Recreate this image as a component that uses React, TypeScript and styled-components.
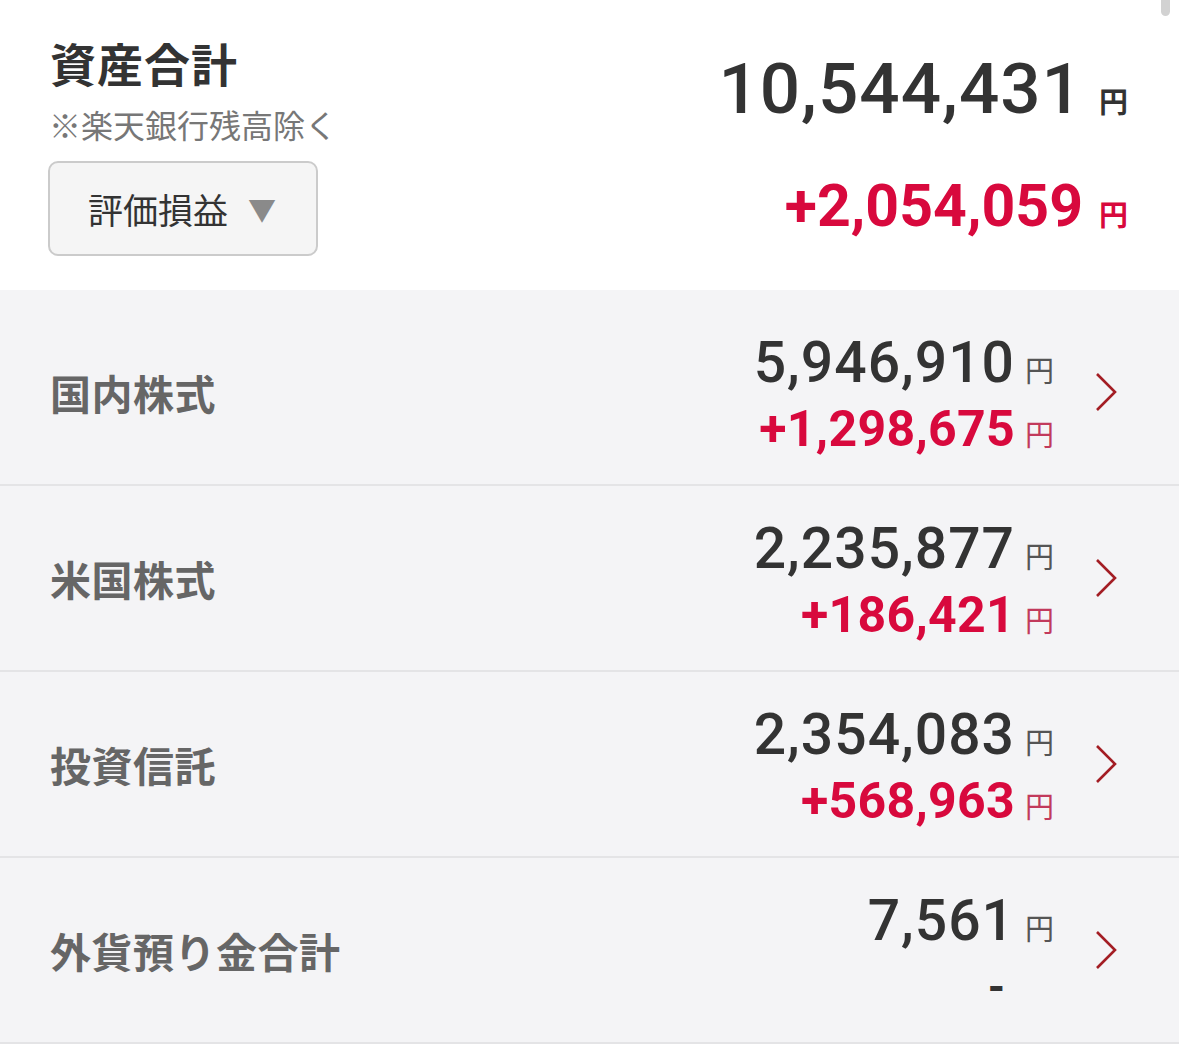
import React, { FC } from 'react';
import styled, { createGlobalStyle } from 'styled-components';

type Holding = {
  label: string;
  amount: string;
  profit?: string;
};

const holdings: Holding[] = [
  { label: '国内株式', amount: '5,946,910', profit: '+1,298,675' },
  { label: '米国株式', amount: '2,235,877', profit: '+186,421' },
  { label: '投資信託', amount: '2,354,083', profit: '+568,963' },
  { label: '外貨預り金合計', amount: '7,561' },
];

const GlobalStyle = createGlobalStyle`
  html, body {
    margin: 0;
    padding: 0;
    background: #ffffff;
  }
  body {
    font-family: Roboto, 'Noto Sans CJK JP', 'Noto Sans', sans-serif;
    color: #333333;
  }
`;

const Chevron: FC = () => (
  <svg width='24' height='40' viewBox='0 0 24 40' fill='none'>
    <path d='M3 2 L21 20 L3 38' stroke='#a31d24' strokeWidth='2.6' strokeLinejoin='miter' />
  </svg>
);

const HoldingRow: FC<{ item: Holding }> = ({ item }) => (
  <Row>
    <RowLabel>{item.label}</RowLabel>
    <Amounts>
      <AmountLine>
        <RowValue>{item.amount}</RowValue>
        <RowUnit>円</RowUnit>
      </AmountLine>
      <AmountLine>
        {item.profit ? (
          <>
            <RowValue $profit>{item.profit}</RowValue>
            <RowUnit $profit>円</RowUnit>
          </>
        ) : (
          <>
            <Dash>-</Dash>
            <RowUnit />
          </>
        )}
      </AmountLine>
    </Amounts>
    <ChevronBox>
      <Chevron />
    </ChevronBox>
  </Row>
);

export default function App() {
  return (
    <>
      <GlobalStyle />
      <Page>
        <ScrollThumb />
        <Summary>
          <SummaryLeft>
            <Title>資産合計</Title>
            <Note>※楽天銀行残高除く</Note>
            <SelectButton type='button'>
              評価損益
              <Caret>▼</Caret>
            </SelectButton>
          </SummaryLeft>
          <SummaryRight>
            <TotalLine>
              <TotalValue>10,544,431</TotalValue>
              <TotalUnit>円</TotalUnit>
            </TotalLine>
            <ProfitLine>
              <ProfitValue>+2,054,059</ProfitValue>
              <ProfitUnit>円</ProfitUnit>
            </ProfitLine>
          </SummaryRight>
        </Summary>
        <List>
          {holdings.map((h) => (
            <HoldingRow key={h.label} item={h} />
          ))}
        </List>
      </Page>
    </>
  );
}

const Page = styled.div`
  position: relative;
  width: 1179px;
  height: 1044px;
  overflow: hidden;
  background: #ffffff;
`;

const ScrollThumb = styled.div`
  position: absolute;
  top: -6px;
  right: 9px;
  width: 9px;
  height: 22px;
  border-radius: 5px;
  background: #d2d2d2;
`;

const Summary = styled.section`
  display: flex;
  justify-content: space-between;
  height: 290px;
  box-sizing: border-box;
  padding: 35px 51px 0 48px;
`;

const SummaryLeft = styled.div`
  display: flex;
  flex-direction: column;
  align-items: flex-start;
`;

const Title = styled.h1`
  margin: 0 0 0 2px;
  font-size: 46px;
  font-weight: 700;
  line-height: 62px;
  color: #333333;
  letter-spacing: 1px;
`;

const Note = styled.div`
  margin: 10px 0 0 1px;
  font-size: 32px;
  line-height: 40px;
  color: #777777;
`;

const SelectButton = styled.button`
  display: flex;
  align-items: center;
  margin-top: 14px;
  width: 270px;
  height: 95px;
  box-sizing: border-box;
  padding: 0 0 0 38px;
  border: 2px solid #cbcbcb;
  border-radius: 10px;
  background: #f5f5f5;
  font-family: 'Noto Sans CJK JP', sans-serif;
  font-size: 35px;
  color: #333333;
  cursor: pointer;
`;

const Caret = styled.span`
  margin-left: 20px;
  font-size: 28px;
  color: #8a8a8a;
`;

const SummaryRight = styled.div`
  display: flex;
  flex-direction: column;
  align-items: flex-end;
`;

const TotalLine = styled.div`
  display: flex;
  align-items: baseline;
  margin-top: 4px;
  line-height: 100px;
`;

const TotalValue = styled.span`
  font-size: 71px;
  font-weight: 500;
  letter-spacing: 1px;
  color: #333333;
`;

const TotalUnit = styled.span`
  margin-left: 16px;
  font-family: 'Noto Sans CJK JP', sans-serif;
  font-size: 29px;
  font-weight: 700;
  color: #333333;
`;

const ProfitLine = styled(TotalLine)`
  margin-top: 16px;
  line-height: 80px;
`;

const ProfitValue = styled.span`
  font-size: 59px;
  font-weight: 700;
  color: #d8093d;
`;

const ProfitUnit = styled(TotalUnit)`
  margin-left: 16px;
  color: #d8093d;
`;

const List = styled.div`
  background: #f4f4f6;
  padding-top: 10px;
`;

const Row = styled.div`
  display: flex;
  align-items: center;
  height: 184px;
  padding: 0 61px 0 50px;
  border-bottom: 2px solid #e4e4e6;
`;

const RowLabel = styled.div`
  flex: 1;
  font-size: 41px;
  font-weight: 700;
  letter-spacing: 0.5px;
  color: #666666;
`;

const Amounts = styled.div`
  display: flex;
  flex-direction: column;
  align-items: flex-end;
  margin-top: 8px;
`;

const AmountLine = styled.div`
  display: flex;
  align-items: baseline;
  height: 66px;
  line-height: 66px;
`;

const RowValue = styled.span<{ $profit?: boolean }>`
  font-size: ${(p) => (p.$profit ? '50px' : '57px')};
  font-weight: ${(p) => (p.$profit ? 700 : 500)};
  letter-spacing: ${(p) => (p.$profit ? '0.3px' : '1px')};
  color: ${(p) => (p.$profit ? '#d8093d' : '#333333')};
`;

const RowUnit = styled.span<{ $profit?: boolean }>`
  display: inline-block;
  width: 29px;
  margin-left: 10px;
  font-family: 'Noto Sans CJK JP', sans-serif;
  font-size: 29px;
  font-weight: 400;
  color: ${(p) => (p.$profit ? '#c23a5c' : '#555555')};
`;

const Dash = styled.span`
  margin-right: 10px;
  font-size: 44px;
  font-weight: 700;
  color: #333333;
`;

const ChevronBox = styled.div`
  display: flex;
  margin-left: 40px;
`;
